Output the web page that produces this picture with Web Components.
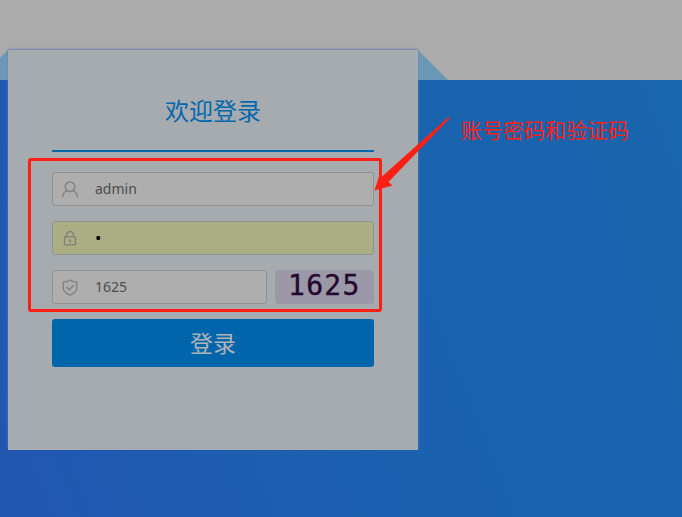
<!DOCTYPE html>
<html lang="zh-CN"><head><meta charset="utf-8"><title>欢迎登录</title>
<style>html,body{margin:0;width:100%;height:100%;overflow:hidden}body{font-family:"Noto Sans","Noto Sans CJK SC",sans-serif}</style></head>
<body>
<login-page>
 <login-card heading="欢迎登录">
  <login-field icon="user">admin</login-field>
  <login-field icon="lock" filled>•</login-field>
  <captcha-row><login-field icon="shield">1625</login-field><captcha-code slot="code">1625</captcha-code></captcha-row>
  <login-button>登录</login-button>
 </login-card>
 <note-overlay slot="note">账号密码和验证码</note-overlay>
</login-page>
<script>
const define=(name,html,setup)=>customElements.define(name,class extends HTMLElement{
 constructor(){super();const t=document.createElement('template');t.innerHTML=html;this.attachShadow({mode:'open'}).append(t.content.cloneNode(true));}
 connectedCallback(){if(setup)setup(this,this.shadowRoot);}
});
define('login-page',`<style>
:host{display:block;position:relative;box-sizing:border-box;width:682px;height:517px;padding:50px 0 0 8px;overflow:hidden;background:linear-gradient(#ababab,#ababab) 0 0/100% 80px no-repeat,linear-gradient(68deg,#2256b1 0%,#1c5eb0 35%,#1963af 65%,#1864ae 82%,#1866ab 100%) 0 80px/100% 437px no-repeat}
.fold{position:absolute;left:0;top:50px}</style>
<svg class="fold" width="450" height="30"><path d="M8 0L0 8V30H8Z M418 0L448 30H418Z" fill="#6b98b6"/></svg><slot></slot><slot name="note"></slot>`);
define('login-card',`<style>
:host{display:flex;flex-direction:column;gap:15px;position:relative;box-sizing:border-box;width:410px;height:400px;padding:0 44px;background:#a6abaf;box-shadow:0 -1px 2px #6f7fb5;clip-path:inset(-4px -2px 0 -2px)}
h1{box-sizing:border-box;height:102px;margin:0 0 5px;padding-top:43px;border-bottom:2px solid #0468ad;color:#0468ad;font-size:24px;line-height:36px;font-weight:400;text-align:center}</style><h1></h1><slot></slot>`,
 (e,r)=>r.querySelector('h1').textContent=e.getAttribute('heading'));
const icons={
user:'<circle cx="8" cy="5.7" r="4.8"/><path d="M.6 16.3C.8 12.5 2.7 10.2 5.6 9.7M10.4 9.7C13.3 10.2 15.2 12.5 15.4 16.3"/>',
lock:'<rect x="2.5" y="6.8" width="11" height="8" rx=".8"/><path d="M4.5 6.5V5a3.5 3.5 0 0 1 7 0V6.5"/><path d="M8 9.5V12.5" stroke-width="1.7"/>',
shield:'<path d="M8 .9C6 2.6 3.7 3.1 1.2 3.1V8.5C1.2 12 3.8 14.6 8 16.2C12.2 14.6 14.8 12 14.8 8.5V3.1C12.3 3.1 10 2.6 8 .9Z"/><path d="M4.4 8.1L7.3 10.8L12 5.9" stroke-width="1.5"/>'};
define('login-field',`<style>
:host{display:flex;align-items:center;flex:0 0 34px;box-sizing:border-box;height:34px;padding:0 9px;gap:17px;background:#aeaeae;border:1px solid #8f9193;border-radius:3px;color:#4c4c4c;font-size:14px;line-height:32px}
:host([filled]){background:#abae83;color:#000}:host([filled]) span{font-size:17px}svg{width:16px;height:17px;fill:none;stroke:#7e7f7f;stroke-width:1.35}</style><svg viewBox="0 0 16 17"></svg><span><slot></slot></span>`,
 (e,r)=>r.querySelector('svg').innerHTML=icons[e.getAttribute('icon')]);
define('captcha-row',`<style>:host{display:grid;grid-template-columns:215px 99px;gap:8px}</style><slot></slot><slot name="code"></slot>`);
define('captcha-code',`<style>:host{display:block;box-sizing:border-box;height:34px;padding-left:13px;border-radius:4px;background:#9b99a7;color:#25082f;font:28px/32px "DejaVu Sans Mono",monospace;letter-spacing:1.3px;-webkit-text-stroke:.4px #25082f}</style><slot></slot>`);
define('login-button',`<style>:host{display:block}button{display:block;width:100%;height:48px;border:0;padding:0;border-radius:3px;background:#0065aa;color:#aeb3b7;font-family:inherit;font-size:23px;font-weight:400;line-height:46px}</style><button><slot></slot></button>`);
define('note-overlay',`<style>
:host{display:block;position:absolute;inset:0;pointer-events:none;color:#ff2015}
.box{position:absolute;left:28px;top:158px;width:354px;height:154px;box-sizing:border-box;border:3px solid #ff2015;border-radius:3px}
svg{position:absolute;left:0;top:0}
span{position:absolute;left:461px;top:115px;font-size:21px;line-height:30px;font-weight:400;white-space:nowrap}</style>
<div class="box"></div><svg width="682" height="517"><path d="M448.5 117L450 118L388.5 182L392.5 185.5L374.5 190.5L379.5 174.5L382 176.5Z" fill="#ff2015"/></svg><span><slot></slot></span>`);
</script></body></html>
